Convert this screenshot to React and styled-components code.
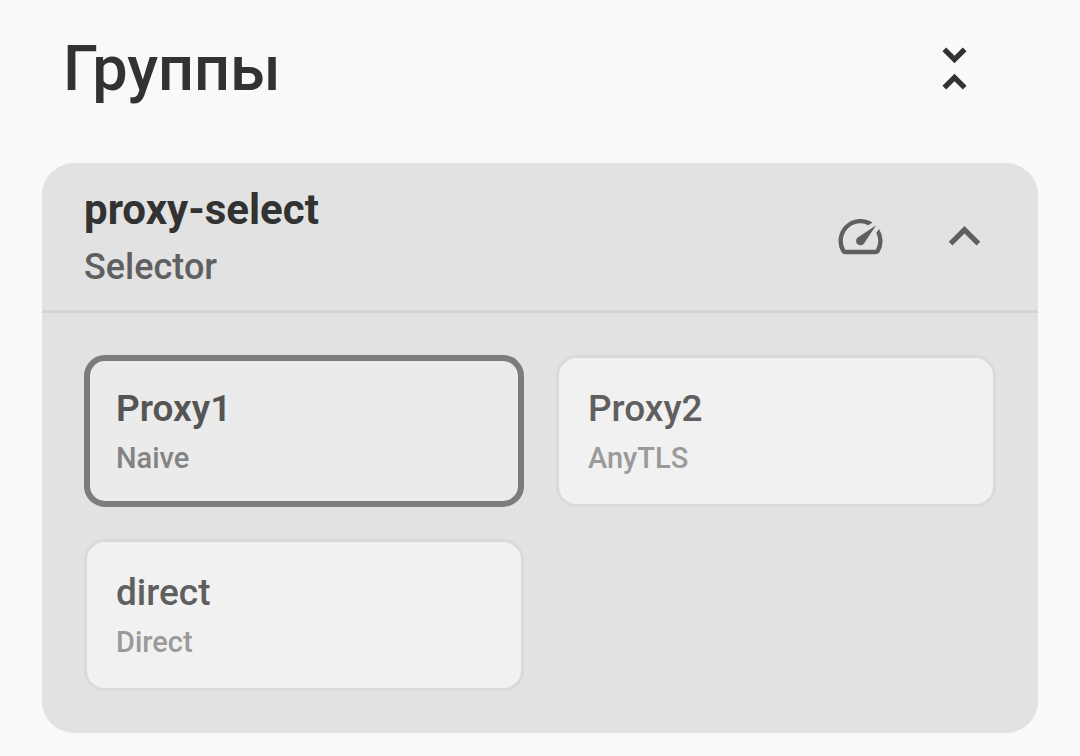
import React, { useState } from "react";
import styled, { createGlobalStyle } from "styled-components";
import { MdExpandLess, MdExpandMore, MdSpeed, MdUnfoldLess } from "react-icons/md";

const groups = [
  {
    tag: "proxy-select",
    type: "Selector",
    items: [
      { tag: "Proxy1", type: "Naive" },
      { tag: "Proxy2", type: "AnyTLS" },
      { tag: "direct", type: "Direct" },
    ],
  },
];

function Group({ group, expanded, onToggle }) {
  const [selected, setSelected] = useState(group.items[0].tag);

  return (
    <GroupCard>
      <GroupHeader>
        <GroupInfo>
          <GroupName>{group.tag}</GroupName>
          <GroupType>{group.type}</GroupType>
        </GroupInfo>
        <IconButton type="button" aria-label="URL Test">
          <MdSpeed size={53} />
        </IconButton>
        <IconButton
          type="button"
          aria-label="Toggle group"
          aria-expanded={expanded}
          onClick={onToggle}
        >
          {expanded ? <MdExpandLess size={63} /> : <MdExpandMore size={63} />}
        </IconButton>
      </GroupHeader>
      {expanded && (
        <ItemGrid>
          {group.items.map(({ tag, type }) => (
            <ItemCard
              key={tag}
              type="button"
              aria-pressed={tag === selected}
              $selected={tag === selected}
              onClick={() => setSelected(tag)}
            >
              <ItemName $selected={tag === selected}>{tag}</ItemName>
              <ItemType $selected={tag === selected}>{type}</ItemType>
            </ItemCard>
          ))}
        </ItemGrid>
      )}
    </GroupCard>
  );
}

function App() {
  const [expanded, setExpanded] = useState({ "proxy-select": true });

  const toggle = (tag) =>
    setExpanded((prev) => ({ ...prev, [tag]: !prev[tag] }));

  return (
    <>
      <GlobalStyle />
      <TopBar>
        <Title>Группы</Title>
        <IconButton
          type="button"
          aria-label="Collapse all"
          $dark
          onClick={() => setExpanded({})}
        >
          <MdUnfoldLess size={63} />
        </IconButton>
      </TopBar>
      <GroupList>
        {groups.map((group) => (
          <Group
            key={group.tag}
            group={group}
            expanded={Boolean(expanded[group.tag])}
            onToggle={() => toggle(group.tag)}
          />
        ))}
      </GroupList>
    </>
  );
}

const GlobalStyle = createGlobalStyle`
  * {
    box-sizing: border-box;
  }
  body {
    margin: 0;
    background: #f9f9f9;
    color: #323232;
    font-family: Roboto, sans-serif;
  }
  button {
    font-family: inherit;
    cursor: pointer;
  }
`;

const TopBar = styled.header`
  display: flex;
  align-items: center;
  justify-content: space-between;
  padding: 16px 74px 1px 63px;
`;

const Title = styled.h1`
  margin: 0;
  font-size: 63px;
  line-height: 75px;
  font-weight: 500;
`;

const IconButton = styled.button`
  display: flex;
  align-items: center;
  justify-content: center;
  width: 104px;
  height: 104px;
  padding: 0;
  border: none;
  border-radius: 50%;
  background: transparent;
  color: ${({ $dark }) => ($dark ? "#323232" : "#5f5f5f")};
`;

const GroupList = styled.main`
  padding: 42px 42px 23px;
`;

const GroupCard = styled.section`
  border-radius: 32px;
  background: #e2e2e2;
  overflow: hidden;
`;

const GroupHeader = styled.div`
  display: flex;
  align-items: center;
  padding: 21px 22px 21px 42px;
`;

const GroupInfo = styled.div`
  flex: 1;
  display: flex;
  flex-direction: column;
  gap: 9px;
`;

const GroupName = styled.h2`
  margin: 0;
  font-size: 42px;
  line-height: 52px;
  font-weight: 700;
`;

const GroupType = styled.span`
  color: #5f5f5f;
  font-size: 36px;
  line-height: 44px;
  font-weight: 500;
`;

const ItemGrid = styled.div`
  display: grid;
  grid-template-columns: repeat(2, 1fr);
  gap: 32px;
  padding: 42px;
  border-top: 3px solid #d5d5d5;
`;

const ItemCard = styled.button`
  display: flex;
  flex-direction: column;
  align-items: flex-start;
  gap: 6px;
  padding: ${({ $selected }) => ($selected ? "24px 26px" : "27px 29px")};
  border: ${({ $selected }) =>
    $selected ? "6px solid #7c7c7c" : "3px solid #dadada"};
  border-radius: 21px;
  background: ${({ $selected }) => ($selected ? "#ebebeb" : "#f1f1f1")};
  text-align: left;
`;

const ItemName = styled.span`
  color: ${({ $selected }) => ($selected ? "#555555" : "#5f5f5f")};
  font-size: 37px;
  line-height: 48px;
  font-weight: ${({ $selected }) => ($selected ? 600 : 500)};
`;

const ItemType = styled.span`
  color: ${({ $selected }) => ($selected ? "#838383" : "#9a9a9a")};
  font-size: 29px;
  line-height: 38px;
  font-weight: 500;
`;

export default App;
